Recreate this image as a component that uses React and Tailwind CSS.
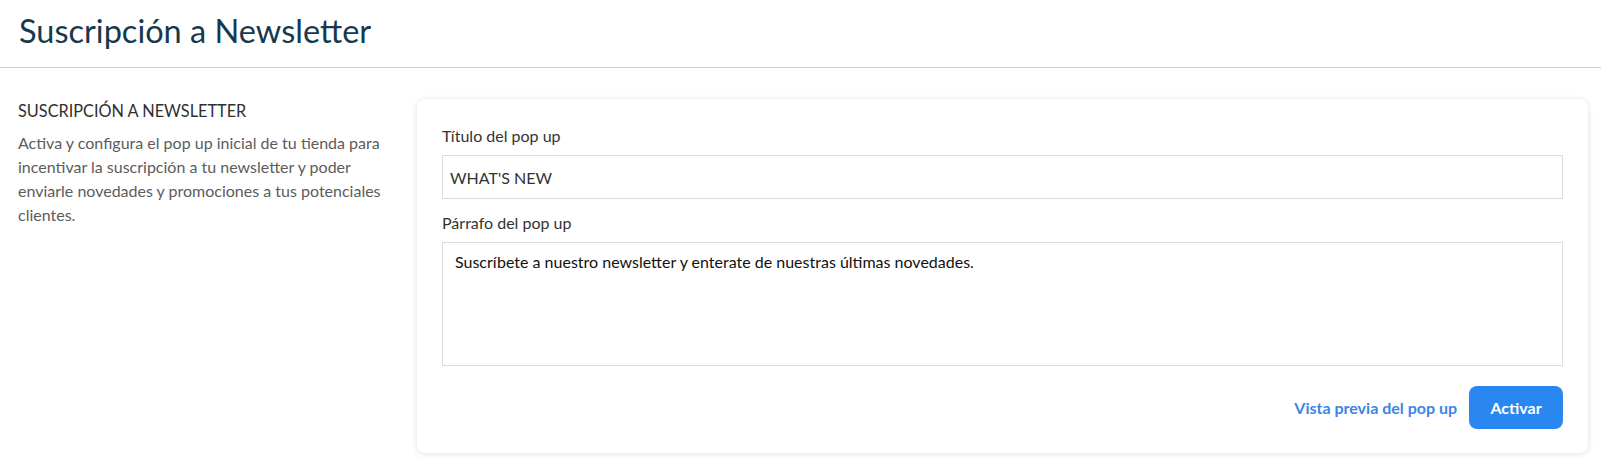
export default function App() {
    return (
        <div className="min-h-screen bg-white font-['Lato',sans-serif]">
            {/* Cabecera */}
            <header className="h-[68px] border-b border-[#cfcfcf] px-[19px] flex items-center">
                <h1 className="text-[32.5px] leading-none text-[#17394d] pb-[5px]">Suscripción a Newsletter</h1>
            </header>

            {/* Contenido */}
            <main className="flex gap-[24px] pl-[18px] pr-[13px] pt-[31px]">
                <section className="w-[375px] shrink-0 pt-[1px]">
                    <h2 className="text-[16.3px] leading-[22px] text-[#2f2f2f] uppercase">Suscripción a Newsletter</h2>
                    <p className="mt-[9px] text-[16px] leading-[24px] text-[#5c5c5c]">
                        Activa y configura el pop up inicial de tu tienda para incentivar la suscripción a tu newsletter y poder enviarle novedades y promociones a tus potenciales clientes.
                    </p>
                </section>

                <section className="flex-1 bg-white rounded-[8px] shadow-[0_1px_6px_rgba(0,0,0,0.12)] px-[25px] pt-[26px] pb-[24px]">
                    <label className="block text-[16px] leading-[22px] text-[#333333] mb-[8px]">Título del pop up</label>
                    <input
                        type="text"
                        defaultValue="WHAT'S NEW"
                        className="w-full h-[44px] border border-[#dcdcdc] px-[7px] text-[16px] text-[#333333] outline-none"
                    />

                    <label className="block mt-[13px] text-[16px] leading-[22px] text-[#333333] mb-[8px]">Párrafo del pop up</label>
                    <textarea
                        defaultValue="Suscríbete a nuestro newsletter y enterate de nuestras últimas novedades."
                        className="block w-full h-[124px] border border-[#dcdcdc] px-[12px] py-[9px] text-[16px] leading-[20px] text-[#111111] outline-none resize-none"
                    />

                    <div className="flex items-center justify-end gap-[12px] mt-[20px]">
                        <button className="text-[16px] font-bold text-[#3a86e8]">Vista previa del pop up</button>
                        <button className="h-[43px] w-[94px] rounded-[8px] bg-[#2b87f0] text-white text-[16px] font-bold">
                            Activar
                        </button>
                    </div>
                </section>
            </main>
        </div>
    );
}
